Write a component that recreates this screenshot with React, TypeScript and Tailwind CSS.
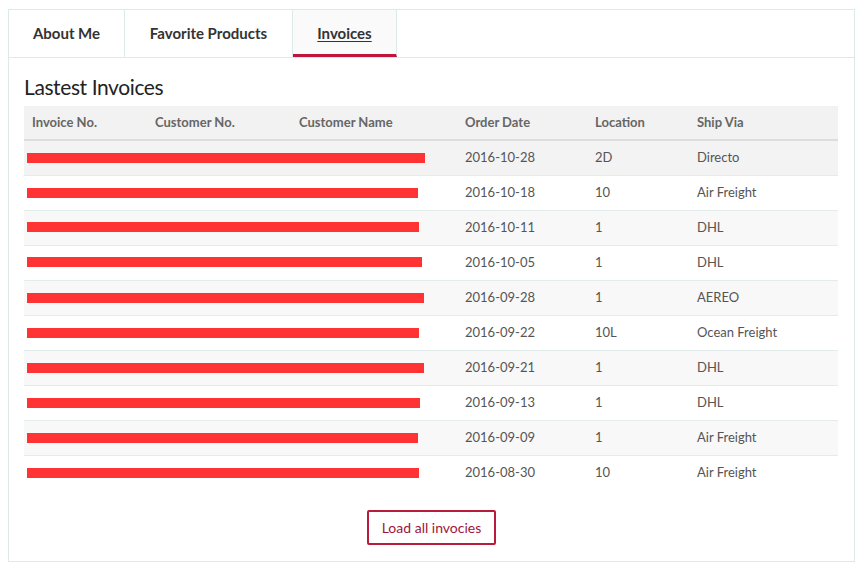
import React from "react";

const rows = [
  { date: "2016-10-28", loc: "2D", ship: "Directo", bar: 398, mt: 12 },
  { date: "2016-10-18", loc: "10", ship: "Air Freight", bar: 391, mt: 12 },
  { date: "2016-10-11", loc: "1", ship: "DHL", bar: 392, mt: 11 },
  { date: "2016-10-05", loc: "1", ship: "DHL", bar: 395, mt: 11 },
  { date: "2016-09-28", loc: "1", ship: "AEREO", bar: 397, mt: 12 },
  { date: "2016-09-22", loc: "10L", ship: "Ocean Freight", bar: 392, mt: 12 },
  { date: "2016-09-21", loc: "1", ship: "DHL", bar: 397, mt: 12 },
  { date: "2016-09-13", loc: "1", ship: "DHL", bar: 393, mt: 12 },
  { date: "2016-09-09", loc: "1", ship: "Air Freight", bar: 391, mt: 12 },
  { date: "2016-08-30", loc: "10", ship: "Air Freight", bar: 392, mt: 12 },
];

const tabs = [
  { label: "About Me", w: "w-[116px]" },
  { label: "Favorite Products", w: "w-[168px]" },
  { label: "Invoices", w: "w-[104px]", active: true },
];

const App = () => {
  return (
    <div className="min-h-screen bg-white pt-[9px] px-2 font-['Lato',sans-serif]">
      <div className="w-[847px] border border-[#dceae8]">
        {/* tabs */}
        <div className="flex h-[48px] border-b border-[#dceae8]">
          {tabs.map((t) => (
            <div
              key={t.label}
              className={`${t.w} flex items-center justify-center border-r border-[#dceae8] text-[15px] font-bold text-[#333] ${
                t.active ? "bg-[#fafafa] border-b-[3px] border-b-[#c0143c] pt-[3px] underline underline-offset-2" : ""
              }`}
            >
              {t.label}
            </div>
          ))}
        </div>

        <div className="px-[15px] pb-[16px]">
          <h2 className="mt-[16px] mb-[6px] text-[21px] leading-[26px] font-normal tracking-[-0.4px] text-[#222] font-['Lato',sans-serif]">
            Lastest Invoices
          </h2>

          <table className="w-[814px] table-fixed border-collapse text-[13px]">
            <colgroup>
              <col className="w-[123px]" />
              <col className="w-[144px]" />
              <col className="w-[166px]" />
              <col className="w-[130px]" />
              <col className="w-[102px]" />
              <col className="w-[149px]" />
            </colgroup>
            <thead>
              <tr className="h-[34px] bg-[#f2f2f2] border-b-2 border-[#dddddd] text-left text-[#666] font-bold">
                <th className="px-2 font-bold">Invoice No.</th>
                <th className="px-2 font-bold">Customer No.</th>
                <th className="px-2 font-bold">Customer Name</th>
                <th className="px-2 font-bold">Order Date</th>
                <th className="px-2 font-bold">Location</th>
                <th className="px-2 font-bold">Ship Via</th>
              </tr>
            </thead>
            <tbody className="text-[#555]">
              {rows.map((r, i) => (
                <tr
                  key={i}
                  className={`h-[35px] border-t border-[#e2edeb] ${
                    i === 0 ? "bg-[#f3f3f3]" : i % 2 === 0 ? "bg-[#f8f8f8]" : "bg-white"
                  }`}
                >
                  <td colSpan={3} className="p-0 align-top">
                    <div
                      className="h-[10px] bg-[#ff3333] ml-[3px]"
                      style={{ width: r.bar, marginTop: r.mt }}
                    />
                  </td>
                  <td className="px-2">{r.date}</td>
                  <td className="px-2">{r.loc}</td>
                  <td className="px-2">{r.ship}</td>
                </tr>
              ))}
            </tbody>
          </table>

          <div className="flex justify-center mt-[20px]">
            <button className="h-[35px] px-[13px] border-2 border-[#b71c3c] rounded-[2px] text-[14px] text-[#a0153a] bg-white">
              Load all invocies
            </button>
          </div>
        </div>
      </div>
    </div>
  );
};

export default App;
